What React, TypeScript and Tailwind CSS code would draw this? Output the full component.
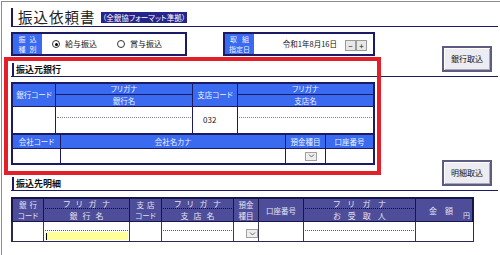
import React from 'react';

function Radio({ checked, label }: { checked?: boolean; label: string }) {
  return (
    <div className="flex items-center gap-[5px]">
      <span className="w-[8px] h-[8px] rounded-full border border-[#333] bg-white flex items-center justify-center">
        {checked && <span className="w-[3px] h-[3px] rounded-full bg-black" />}
      </span>
      <span className="text-[8px] leading-none">{label}</span>
    </div>
  );
}

function SideButton({ label }: { label: string }) {
  return (
    <div className="w-[50px] h-[26px] border-2 border-[#5c5c80] bg-[#ececf2] flex items-center justify-center text-[8px] leading-none text-[#111] shadow-[inset_1px_1px_0_#ffffff,inset_-1px_-1px_0_#a8a8bc]">
      {label}
    </div>
  );
}

function SectionLabel({ text, className }: { text: string; className: string }) {
  return (
    <div className={`ml-px h-[13px] border-l-2 border-[#1a1a66] pl-[2px] text-[9px] font-bold leading-[13px] ${className}`}>
      {text}
    </div>
  );
}

function SelectButton() {
  return (
    <div className="w-[12px] h-[9px] border border-[#a0a0a0] bg-[#eeeeee] flex items-center justify-center">
      <svg width="7" height="4" viewBox="0 0 7 4">
        <polyline points="1,0.5 3.5,3 6,0.5" fill="none" stroke="#666" strokeWidth="1" />
      </svg>
    </div>
  );
}

function BankTable() {
  return (
    <div className="w-[364px] border-2 border-[#1a1a66] text-[7.5px] leading-none">
      <div className="flex h-[23px] border-b border-[#1a1a66] bg-[#3a6af0] text-[#eef2ff]">
        <div className="w-[43px] border-r border-[#1a1a66] flex items-center justify-center">銀行コード</div>
        <div className="w-[137px] border-r border-[#1a1a66] flex flex-col">
          <div className="h-[11px] border-b border-[#1a1a66] flex items-center justify-center">フリガナ</div>
          <div className="flex-1 flex items-center justify-center">銀行名</div>
        </div>
        <div className="w-[45px] border-r border-[#1a1a66] flex items-center justify-center">支店コード</div>
        <div className="flex-1 flex flex-col">
          <div className="h-[11px] border-b border-[#1a1a66] flex items-center justify-center">フリガナ</div>
          <div className="flex-1 flex items-center justify-center">支店名</div>
        </div>
      </div>
      <div className="flex h-[26px]">
        <div className="w-[43px] border-r border-[#1a1a66]" />
        <div className="w-[137px] border-r border-[#1a1a66] px-px">
          <div className="h-[11px] border-b border-dotted border-[#8080a0]" />
        </div>
        <div className="w-[45px] border-r border-[#1a1a66] flex items-center pl-[10px] text-[8px] text-[#222]">032</div>
        <div className="flex-1 px-px">
          <div className="h-[11px] border-b border-dotted border-[#8080a0]" />
        </div>
      </div>
      <div className="flex flex-col h-[30px] border-t-2 border-[#1a1a66]">
        <div className="flex h-[14px] border-b border-[#1a1a66] bg-[#3a6af0] text-[#eef2ff]">
          <div className="w-[48px] border-r border-[#1a1a66] flex items-center justify-center">会社コード</div>
          <div className="w-[225px] border-r border-[#1a1a66] flex items-center justify-center">会社名カナ</div>
          <div className="w-[40px] border-r border-[#1a1a66] flex items-center justify-center">預金種目</div>
          <div className="flex-1 flex items-center justify-center">口座番号</div>
        </div>
        <div className="flex flex-1">
          <div className="w-[48px] border-r border-[#1a1a66]" />
          <div className="w-[225px] border-r border-[#1a1a66]" />
          <div className="w-[40px] border-r border-[#1a1a66] flex items-center justify-end pr-[8px]">
            <SelectButton />
          </div>
          <div className="flex-1" />
        </div>
      </div>
    </div>
  );
}

function DetailTable() {
  const head = 'border-r border-[#15154a] flex flex-col items-center justify-center text-[7.5px] leading-[11px]';
  const kana = 'border-r border-[#15154a] flex flex-col';
  const cell = 'border-r border-[#3a3a55]';
  return (
    <div className="ml-[9px] mt-[6px] w-[463px] text-[8px] leading-[9px]">
      <div className="flex h-[25px] border-2 border-b border-[#15154a] bg-[#4d4d99] text-[#e2e2f4]">
        <div className={`w-[31px] ${head}`}>
          <span className="tracking-[3px] pl-[3px]">銀行</span>
          <span>コード</span>
        </div>
        <div className={`w-[86px] ${kana}`}>
          <div className="h-[10px] mx-px border-b border-dotted border-[#111] flex items-center justify-center tracking-[6px] pl-[6px]">フリガナ</div>
          <div className="flex-1 flex items-center justify-center tracking-[5px] pl-[5px]">銀行名</div>
        </div>
        <div className={`w-[32px] ${head}`}>
          <span className="tracking-[3px] pl-[3px]">支店</span>
          <span>コード</span>
        </div>
        <div className={`w-[72px] ${kana}`}>
          <div className="h-[10px] mx-px border-b border-dotted border-[#111] flex items-center justify-center tracking-[6px] pl-[6px]">フリガナ</div>
          <div className="flex-1 flex items-center justify-center tracking-[5px] pl-[5px]">支店名</div>
        </div>
        <div className={`w-[25px] ${head}`}>
          <span>預金</span>
          <span>種目</span>
        </div>
        <div className={`w-[45px] ${head}`}>口座番号</div>
        <div className={`w-[112px] ${kana}`}>
          <div className="h-[10px] mx-px border-b border-dotted border-[#111] flex items-center justify-center tracking-[8px] pl-[8px]">フリガナ</div>
          <div className="flex-1 flex items-center justify-center tracking-[7px] pl-[7px]">お受取人</div>
        </div>
        <div className="flex-1 relative flex items-center justify-center pr-[6px]">
          <span className="tracking-[8px] pl-[8px]">金額</span>
          <span className="absolute right-[2px] bottom-[2px] text-[7px] leading-[8px]">円</span>
        </div>
      </div>
      <div className="flex h-[20px] border-l-2 border-r border-b border-[#2a2a50]">
        <div className={`w-[31px] ${cell}`} />
        <div className={`w-[86px] ${cell} flex flex-col px-px`}>
          <div className="h-[9px] border-b border-dotted border-[#555]" />
          <div className="mt-px h-[8px] bg-[#ffff99] flex items-center pl-px">
            <span className="w-px h-[7px] bg-black" />
          </div>
        </div>
        <div className={`w-[32px] ${cell}`} />
        <div className={`w-[72px] ${cell} px-px`}>
          <div className="h-[9px] border-b border-dotted border-[#555]" />
        </div>
        <div className={`w-[25px] ${cell} flex justify-end items-start pt-[7px]`}>
          <SelectButton />
        </div>
        <div className={`w-[45px] ${cell}`} />
        <div className={`w-[112px] ${cell} px-px`}>
          <div className="h-[9px] border-b border-dotted border-[#555]" />
        </div>
        <div className="flex-1" />
      </div>
    </div>
  );
}

export default function App() {
  return (
    <div className="relative w-[500px] h-[255px] overflow-hidden bg-white pl-px pt-px font-['Noto_Sans_CJK_JP','Noto_Sans',sans-serif] [font-feature-settings:'palt'] text-[#111]">
      <div className="h-full border-l border-t border-[#8c8c8c]">
        {/* Title */}
        <div className="ml-[9px] mr-[2px] mt-[6px] h-[19px] border-l-2 border-b border-[#1a1a66] flex items-center pl-[5px]">
          <span className="text-[14.5px] leading-none tracking-[1px] text-[#222]">振込依頼書</span>
          <span className="ml-[5px] bg-[#24248c] text-white text-[7.5px] leading-[9px] px-[2px] py-px">（全銀協フォーマット準拠）</span>
        </div>

        {/* 振込種別 / 取組指定日 */}
        <div className="ml-[9px] mr-[2px] mt-[5px] flex border-b border-[#1a1a66]">
          <div className="flex-1 flex flex-col items-start">
            <div className="flex h-[24px]">
              <div className="w-[176px] flex border-2 border-[#1a1a66]">
                <div className="w-[29px] bg-[#3a6af0] text-[#eef2ff] text-[7px] leading-[10px] flex flex-col items-center justify-center">
                  <span className="tracking-[4px] pl-[4px]">振込</span>
                  <span className="tracking-[4px] pl-[4px]">種別</span>
                </div>
                <div className="flex items-center pl-[10px] gap-[20px]">
                  <Radio checked label="給与振込" />
                  <Radio label="賞与振込" />
                </div>
              </div>
              <div className="ml-[36px] w-[152px] flex border-2 border-[#1a1a66]">
                <div className="w-[29px] bg-[#3a6af0] text-[#eef2ff] text-[7px] leading-[10px] flex flex-col items-center justify-center">
                  <span className="tracking-[5px] pl-[5px]">取組</span>
                  <span>指定日</span>
                </div>
                <div className="flex-1 flex items-center justify-end pr-[6px]">
                  <span className="text-[7.5px] leading-none mr-[8px]">令和1年8月16日</span>
                  <div className="flex pt-[3px]">
                    <div className="w-[11px] h-[11px] border border-[#9a9a9a] bg-[#e8e8e8] flex items-center justify-center text-[8px] leading-none">−</div>
                    <div className="w-[11px] h-[11px] border border-[#9a9a9a] bg-[#e8e8e8] flex items-center justify-center text-[8px] leading-none">+</div>
                  </div>
                </div>
              </div>
            </div>
            <SectionLabel text="振込元銀行" className="mt-[7px]" />
          </div>
          <div className="self-end mb-[4px] mr-[6px]">
            <SideButton label="銀行取込" />
          </div>
        </div>

        {/* 振込元銀行 table + 振込先明細 header */}
        <div className="ml-[9px] mr-[2px] pt-[5px] flex border-b border-[#1a1a66]">
          <div className="flex-1 flex flex-col items-start">
            <BankTable />
            <SectionLabel text="振込先明細" className="mt-[12px]" />
          </div>
          <div className="self-end mb-[4px] mr-[6px]">
            <SideButton label="明細取込" />
          </div>
        </div>

        <DetailTable />
      </div>

      {/* highlight annotation */}
      <div className="absolute left-[4px] top-[57px] w-[377px] h-[118px] border-4 border-[#e3202a] pointer-events-none" />
    </div>
  );
}
